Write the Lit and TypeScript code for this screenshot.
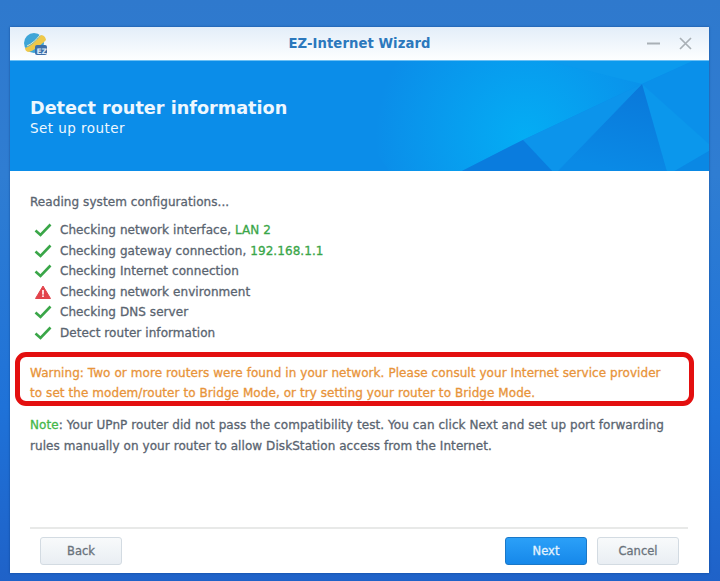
import { LitElement, html, css, svg } from "lit";
import { customElement } from "lit/decorators.js";

const checks = [
    { ok: true, label: "Checking network interface,", value: "LAN 2" },
    { ok: true, label: "Checking gateway connection,", value: "192.168.1.1" },
    { ok: true, label: "Checking Internet connection" },
    { ok: false, label: "Checking network environment" },
    { ok: true, label: "Checking DNS server" },
    { ok: true, label: "Detect router information" },
];

const checkIcon = svg`<svg width="18" height="14" viewBox="0 0 18 14"><path d="M1.5 7.5 L6.5 12 L16.5 1.5" fill="none" stroke="#3aa648" stroke-width="2.6"/></svg>`;
const warnIcon = svg`<svg width="16" height="14" viewBox="0 0 16 14"><path d="M8 1 L15.5 13.5 H0.5 Z" fill="#e2444c" stroke="#e2444c" stroke-linejoin="round"/><rect x="7.2" y="5" width="1.6" height="4.6" fill="#fff"/><rect x="7.2" y="10.4" width="1.6" height="1.6" fill="#fff"/></svg>`;

@customElement("app-root")
export class AppRoot extends LitElement {
    static override styles = css`
        :host {
            display: block;
            box-sizing: border-box;
            width: 720px;
            height: 581px;
            padding: 27px 11px 8px 10px;
            background: linear-gradient(180deg, #2f79cd 0%, #2f7dd2 30%, #1f72d8 70%, #1f62c8 100%);
            font-family: "DejaVu Sans", Verdana, sans-serif;
            font-size: 12px;
            letter-spacing: 0.07px;
            color: #5a6470;
        }

        .window {
            display: flex;
            flex-direction: column;
            height: 100%;
            background: #fff;
            box-shadow: 0 0 2px rgba(10, 60, 130, 0.7);
        }

        .titlebar {
            display: flex;
            align-items: center;
            height: 33px;
            flex: none;
            padding: 0 17px 0 12px;
            background: linear-gradient(180deg, #e3eef9, #fdfeff);
        }
        .logo {
            display: block;
            flex: none;
        }
        .title {
            flex: 1;
            text-align: center;
            color: #2b78bd;
            font-size: 13.2px;
            font-weight: bold;
            padding-left: 24px;
        }
        .controls {
            display: flex;
            align-items: center;
            gap: 19px;
        }

        .banner {
            position: relative;
            height: 111px;
            flex: none;
            box-sizing: border-box;
            padding: 36px 20px 0;
            background: #0b8de9;
            color: #eef7fe;
            overflow: hidden;
            border-top: 1px solid #6cc0f4;
        }
        .banner svg {
            position: absolute;
            left: 0;
            top: 0;
        }
        .banner h1 {
            position: relative;
            margin: 0;
            font-size: 17.65px;
            letter-spacing: 0;
            line-height: 22px;
            font-weight: bold;
        }
        .banner p {
            position: relative;
            margin: 0;
            font-size: 13.5px;
            letter-spacing: 0.45px;
            line-height: 19px;
        }

        .content {
            flex: 1;
            padding: 21px 20px 0;
            -webkit-text-stroke: 0.3px;
        }
        .reading {
            margin: 0 0 8px;
            line-height: 20px;
        }
        .checks {
            display: flex;
            flex-direction: column;
            list-style: none;
            margin: 0;
            padding: 0 0 0 4px;
        }
        .checks li {
            display: flex;
            align-items: center;
            height: 20.5px;
            gap: 8px;
        }
        .mark {
            display: flex;
            justify-content: center;
            width: 18px;
        }
        .value {
            color: #3aa648;
        }

        .warning {
            position: relative;
            margin: 20px 0 0;
            line-height: 20px;
            color: #e8943a;
        }
        .warning::after {
            content: "";
            position: absolute;
            left: -15px;
            right: -5px;
            top: -11px;
            bottom: -3px;
            border: 5px solid #e30f0f;
            border-radius: 11px;
        }
        .note {
            margin: 12px 0 0;
            line-height: 20.5px;
        }
        .note b {
            font-weight: normal;
            color: #45b749;
        }

        .footer {
            display: flex;
            flex: none;
            justify-content: space-between;
            margin: 0 21px 0 20px;
            padding: 8px 9px 8px 10px;
            border-top: 2px solid #e8e9e8;
        }
        .footer div {
            display: flex;
            gap: 10px;
        }
        button {
            box-sizing: border-box;
            width: 82px;
            height: 28px;
            padding: 0;
            border: 1px solid #d3dbe2;
            border-radius: 3px;
            background: linear-gradient(180deg, #f8fafb, #e9eef3);
            color: #6a737c;
            font: inherit;
            font-size: 11.5px;
            -webkit-text-stroke: 0.3px;
        }
        button.primary {
            border-color: #1a78c8;
            background: linear-gradient(180deg, #2ba0f8, #1688ea);
            color: #e4f3fe;
        }
    `;

    private renderLogo() {
        return html`<svg class="logo" width="26" height="24" viewBox="0 0 26 24">
            <circle cx="12" cy="11" r="10" fill="#3ea5d8"/>
            <path d="M3 16 C8 15 15 8 19 3 C22 3 24 6 24 8 C19 13 12 19 6 20 C4 19 3 18 3 16 Z" fill="#eec84a"/>
            <path d="M5 14 C10 12 15 7 18 3" fill="none" stroke="#fbeeb0" stroke-width="1"/>
            <rect x="13" y="13" width="12" height="10" rx="2" fill="#3d6ea8"/>
            <text x="14.5" y="21.5" font-size="7.5" font-weight="bold" fill="#dbe8f6" style="letter-spacing:0">EZ</text>
        </svg>`;
    }

    private renderBannerArt() {
        return html`<svg width="699" height="111" viewBox="0 0 699 111">
            <defs>
                <radialGradient id="glow" gradientUnits="userSpaceOnUse" cx="515" cy="76" r="150">
                    <stop offset="0" stop-color="#04adf4"/>
                    <stop offset="1" stop-color="#04adf4" stop-opacity="0"/>
                </radialGradient>
                <linearGradient id="shade" gradientUnits="userSpaceOnUse" x1="632" y1="23" x2="610" y2="111">
                    <stop offset="0" stop-color="#0a78da"/>
                    <stop offset="1" stop-color="#0a8ae6"/>
                </linearGradient>
            </defs>
            <polygon points="300,0 700,0 632,23 513,79 450,111 380,111" fill="url(#glow)"/>
            <polygon points="537,0 683,0 632,23" fill="#0b9aed"/>
            <polygon points="632,23 683,0 699,0 699,83 657,111" fill="#0a90ea"/>
            <polygon points="632,23 699,83 699,90 663,111 657,111" fill="#0b97ec"/>
            <polygon points="663,111 699,90 699,111" fill="#0a88e4"/>
            <polygon points="632,23 657,111 547,111" fill="url(#shade)"/>
            <polygon points="632,23 547,111 543,111 513,79" fill="#0c94eb"/>
            <polygon points="513,79 543,111 450,111" fill="#0a7cde"/>
        </svg>`;
    }

    override render() {
        return html`
            <div class="window">
                <div class="titlebar">
                    ${this.renderLogo()}
                    <div class="title">EZ-Internet Wizard</div>
                    <div class="controls">
                        <svg width="13" height="13" viewBox="0 0 13 13"><path d="M0 6.5 H13" stroke="#a9b0b6" stroke-width="2"/></svg>
                        <svg width="13" height="13" viewBox="0 0 13 13"><path d="M1 1 L12 12 M12 1 L1 12" stroke="#a9b0b6" stroke-width="1.7"/></svg>
                    </div>
                </div>
                <div class="banner">
                    ${this.renderBannerArt()}
                    <h1>Detect router information</h1>
                    <p>Set up router</p>
                </div>
                <div class="content">
                    <p class="reading">Reading system configurations...</p>
                    <ul class="checks">
                        ${checks.map(
                            (c) => html`<li>
                                <span class="mark">${c.ok ? checkIcon : warnIcon}</span>
                                <span>${c.label}${c.value ? html` <span class="value">${c.value}</span>` : ""}</span>
                            </li>`
                        )}
                    </ul>
                    <p class="warning">Warning: Two or more routers were found in your network. Please consult your Internet service provider<br />to set the modem/router to Bridge Mode, or try setting your router to Bridge Mode.</p>
                    <p class="note"><b>Note</b>: Your UPnP router did not pass the compatibility test. You can click Next and set up port forwarding<br />rules manually on your router to allow DiskStation access from the Internet.</p>
                </div>
                <div class="footer">
                    <button>Back</button>
                    <div>
                        <button class="primary">Next</button>
                        <button>Cancel</button>
                    </div>
                </div>
            </div>
        `;
    }
}
